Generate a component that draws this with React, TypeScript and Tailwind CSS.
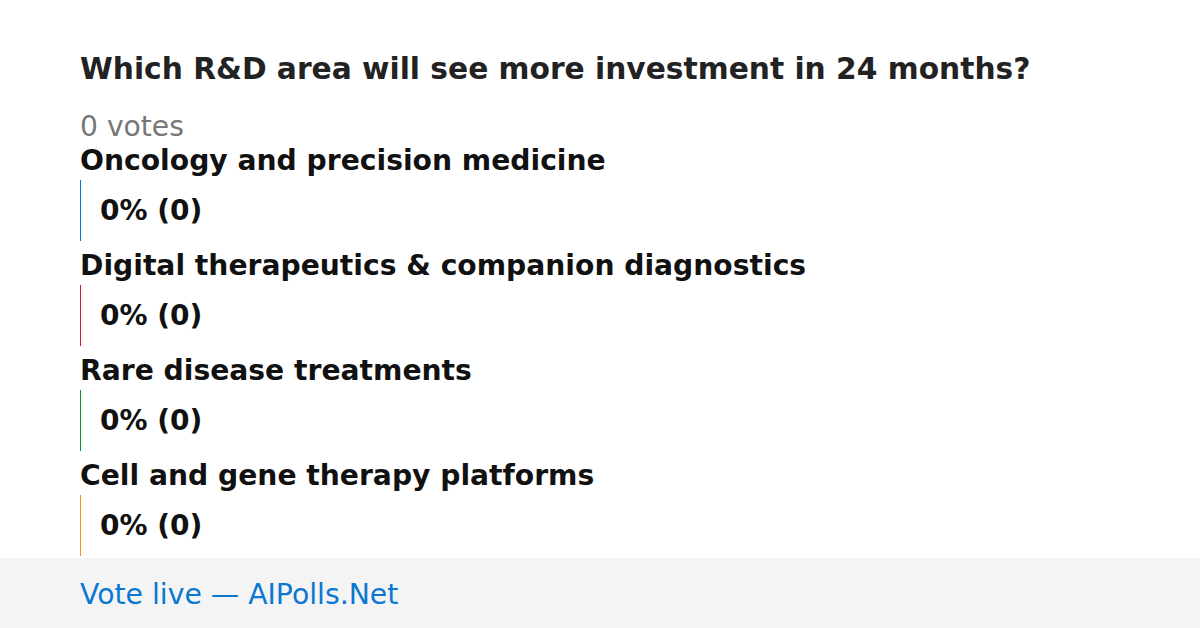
const options = [
  { label: "Oncology and precision medicine", color: "border-[#0a74d6]" },
  { label: "Digital therapeutics & companion diagnostics", color: "border-[#e0102f]" },
  { label: "Rare disease treatments", color: "border-[#11913a]" },
  { label: "Cell and gene therapy platforms", color: "border-[#f7930a]" },
];

const App = () => {
  return (
    <div className="w-[1200px] h-[628px] bg-white flex flex-col font-['DejaVu_Sans',sans-serif]">
      <div className="flex-1 px-[80px] pt-[52px]">
        <h1 className="text-[29.7px] leading-[34px] font-bold text-[#222]">
          Which R&amp;D area will see more investment in 24 months?
        </h1>
        <div className="mt-[32px] text-[28.2px] leading-[18px] h-[18px] text-[#777]">0 votes</div>
        {options.map((o) => (
          <div key={o.label}>
            <div className="pt-[10px] pb-[4px] text-[28.2px] leading-[30px] font-bold text-[#111]">
              {o.label}
            </div>
            <div className={`h-[61px] border-l ${o.color} pl-[19px] flex items-center`}>
              <span className="text-[28px] leading-[30px] font-bold text-[#111]">0% (0)</span>
            </div>
          </div>
        ))}
      </div>
      <div className="h-[70px] bg-[#f4f4f4] px-[80px] flex items-center pt-[4px]">
        <span className="text-[28.3px] leading-[30px] text-[#0a78d2]">Vote live — AIPolls.Net</span>
      </div>
    </div>
  );
};

export default App;
